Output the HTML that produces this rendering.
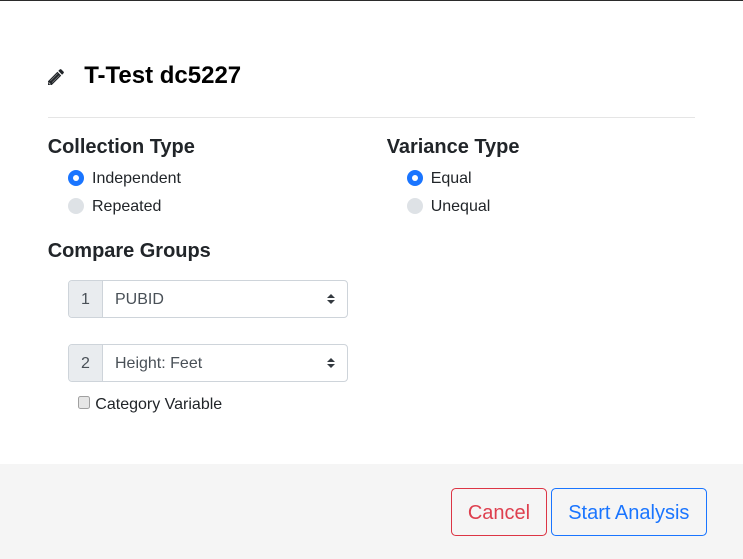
<!DOCTYPE html>
<html>
<head>
<meta charset="utf-8">
<style>
html,body{margin:0;padding:0;width:743px;height:559px;overflow:hidden;background:#fff;font-family:"Liberation Sans",Arial,sans-serif;color:#212529}
.a{position:absolute;white-space:nowrap}
.h{font-size:20px;font-weight:700;line-height:24px;letter-spacing:-.02px}
.l{font-size:16px;line-height:24px}
.r{position:absolute;width:16px;height:16px;border-radius:50%;background:#dee2e6}
.r.on{background:#1a75ff}
.r.on:after{content:"";position:absolute;left:5px;top:5px;width:6px;height:6px;border-radius:50%;background:#fff}
.ig{position:absolute;left:68px;width:280px;height:38px;box-sizing:border-box;border:1px solid #ced4da;border-radius:4px;background:#fff;overflow:hidden}
.ig .n{position:absolute;left:0;top:1px;width:33px;height:36px;margin-top:-1px;background:#e9ecef;border-right:1px solid #ced4da;text-align:center;font-size:16px;line-height:38px;color:#495057;text-indent:0}
.ig .t{position:absolute;left:46px;top:1px;font-size:16px;line-height:36px;color:#495057}
.ig svg{position:absolute;left:258px;top:13px}
.btn{position:absolute;top:488px;height:48px;box-sizing:border-box;border:1px solid;border-radius:4.8px;font-size:20px;line-height:48px;text-align:center}
</style>
</head>
<body>
<div class="a" style="left:0;top:0;width:743px;height:1px;background:#2b2b2b"></div>

<svg class="a" style="left:47px;top:68px" width="18" height="18" viewBox="0 0 18 18"><path d="M1 13.2 10.4 3.8l3.8 3.8L4.8 17H1v-3.8zM11.3 2.9l1.4-1.4c.5-.5 1.2-.5 1.7 0l2.1 2.1c.5.5.5 1.2 0 1.7l-1.4 1.4-3.8-3.8z" fill="#212529"/><path d="M3.4 12.8 10.6 5.6M5.2 14.6 12.4 7.4" stroke="#9a9a9a" stroke-width=".6" fill="none"/><path d="M1.5 14.5 3.5 16.5" stroke="#bbb" stroke-width=".9" fill="none"/></svg>
<div class="a" style="left:84.2px;top:61px;font-size:24px;font-weight:700;line-height:30px;color:#000">T-Test dc5227</div>
<div class="a" style="left:48px;top:117px;width:647px;height:1px;background:#e5e5e5"></div>

<div class="a h" style="left:47.7px;top:135px">Collection Type</div>
<div class="r on" style="left:68px;top:170px"></div>
<div class="a l" style="left:92px;top:167px">Independent</div>
<div class="r" style="left:68px;top:198px"></div>
<div class="a l" style="left:92px;top:195px">Repeated</div>

<div class="a h" style="left:386.7px;top:135px">Variance Type</div>
<div class="r on" style="left:407px;top:170px"></div>
<div class="a l" style="left:430.7px;top:167px">Equal</div>
<div class="r" style="left:407px;top:198px"></div>
<div class="a l" style="left:430.7px;top:195px">Unequal</div>

<div class="a h" style="left:47.7px;top:239px">Compare Groups</div>

<div class="ig" style="top:280px"><div class="n">1</div><div class="t">PUBID</div>
<svg width="8" height="10" viewBox="0 0 8 10"><path d="M4 0 8 4H0zM4 10 0 6h8z" fill="#343a40"/></svg></div>
<div class="ig" style="top:344px"><div class="n">2</div><div class="t">Height: Feet</div>
<svg width="8" height="10" viewBox="0 0 8 10"><path d="M4 0 8 4H0zM4 10 0 6h8z" fill="#343a40"/></svg></div>

<div class="a" style="left:78px;top:396px;width:12px;height:13px;box-sizing:border-box;border:1px solid #a0a0a0;border-radius:2.5px;background:#e6e6e6"></div>
<div class="a l" style="left:95.3px;top:393px">Category Variable</div>

<div class="a" style="left:0;top:464px;width:743px;height:95px;background:#f5f5f5"></div>
<div class="btn" style="left:451px;width:96px;border-color:#dc3545;color:#de3f4e">Cancel</div>
<div class="btn" style="left:551px;width:156px;border-color:#1a75ff;color:#1a75ff;text-indent:-.4px">Start Analysis</div>
</body>
</html>
